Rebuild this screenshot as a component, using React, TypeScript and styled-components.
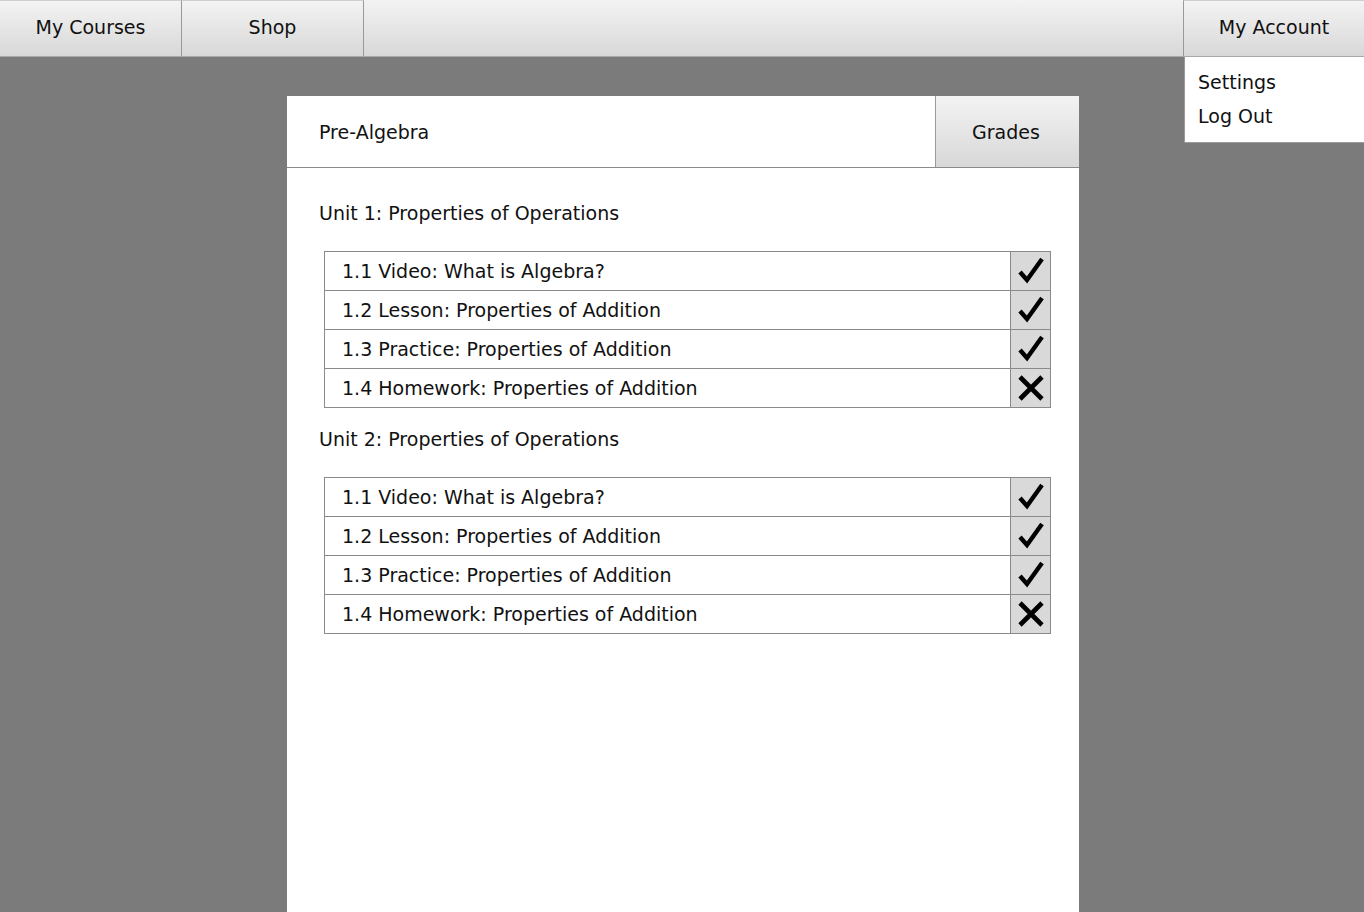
import React from "react";
import styled, { createGlobalStyle } from "styled-components";

const Global = createGlobalStyle`
  html, body { margin: 0; padding: 0; }
  body {
    background: #7b7b7b;
    font-family: "DejaVu Sans", Verdana, sans-serif;
    color: #111;
    min-height: 912px;
    overflow: hidden;
  }
`;

const Page = styled.div`
  display: flex;
  flex-direction: column;
  height: 912px;
`;

const TopBar = styled.nav`
  display: flex;
  height: 57px;
  box-sizing: border-box;
  background: linear-gradient(#f3f3f3, #d8d8d8);
  border-bottom: 1px solid #a8a8a8;
`;

const NavButton = styled.div<{ $right?: boolean }>`
  width: ${(p) => (p.$right ? "181px" : "182px")};
  box-sizing: border-box;
  display: flex;
  align-items: center;
  justify-content: center;
  font-size: 19px;
  border-right: ${(p) => (p.$right ? "none" : "1px solid #9a9a9a")};
  border-left: ${(p) => (p.$right ? "1px solid #9a9a9a" : "none")};
  border-top: 1px solid #cfcfcf;
  margin-left: ${(p) => (p.$right ? "auto" : "0")};
  background: linear-gradient(#f3f3f3, #d8d8d8);
  padding-bottom: 3px;
`;

const Body = styled.div`
  flex: 1;
  position: relative;
  display: flex;
  justify-content: center;
  padding-top: 39px;
  padding-left: 2px;
`;

const Dropdown = styled.div`
  position: absolute;
  top: 0;
  right: 0;
  width: 180px;
  height: 86px;
  box-sizing: border-box;
  background: #fff;
  border-left: 1px solid #9a9a9a;
  border-bottom: 1px solid #9a9a9a;
  padding: 14px 0 0 13px;
  display: flex;
  flex-direction: column;
  gap: 11px;
  font-size: 19px;
`;

const MenuItem = styled.div`
  line-height: 23px;
`;

const Card = styled.main`
  width: 792px;
  background: #fff;
  display: flex;
  flex-direction: column;
`;

const CardHeader = styled.header`
  display: flex;
  height: 72px;
  box-sizing: border-box;
  border-bottom: 1px solid #8a8a8a;
`;

const CourseTitle = styled.div`
  flex: 1;
  display: flex;
  align-items: center;
  padding-left: 32px;
  font-size: 19px;
`;

const GradesButton = styled.div`
  width: 144px;
  box-sizing: border-box;
  display: flex;
  align-items: center;
  justify-content: center;
  font-size: 19px;
  border-left: 1px solid #9a9a9a;
  background: linear-gradient(#f3f3f3, #d8d8d8);
  padding-right: 3px;
`;

const Content = styled.div`
  padding: 33px 28px 0 32px;
  display: flex;
  flex-direction: column;
`;

const UnitTitle = styled.h2`
  margin: 0;
  font-weight: normal;
  font-size: 19px;
  line-height: 24px;
  margin-bottom: 26px;
`;

const List = styled.div`
  margin-left: 5px;
  border: 1px solid #8a8a8a;
  border-bottom: none;
  margin-bottom: 19px;
`;

const Row = styled.div`
  display: flex;
  height: 39px;
  box-sizing: border-box;
  border-bottom: 1px solid #8a8a8a;
`;

const RowLabel = styled.div`
  flex: 1;
  display: flex;
  align-items: center;
  padding-left: 17px;
  font-size: 19px;
`;

const StatusCell = styled.div`
  width: 39px;
  border-left: 1px solid #8a8a8a;
  background: #d9d9d9;
  display: flex;
  align-items: center;
  justify-content: center;
`;

const Check = () => (
  <svg width="30" height="30" viewBox="0 0 30 30">
    <path d="M4 16 L11 24 L26 3" fill="none" stroke="#000" strokeWidth="4.4" strokeLinecap="butt" strokeLinejoin="miter" />
  </svg>
);

const Cross = () => (
  <svg width="28" height="28" viewBox="0 0 28 28">
    <path d="M3 3 L25 25 M25 3 L3 25" fill="none" stroke="#000" strokeWidth="4.6" />
  </svg>
);

const items = [
  { label: "1.1 Video: What is Algebra?", done: true },
  { label: "1.2 Lesson: Properties of Addition", done: true },
  { label: "1.3 Practice: Properties of Addition", done: true },
  { label: "1.4 Homework: Properties of Addition", done: false },
];

const units = ["Unit 1: Properties of Operations", "Unit 2: Properties of Operations"];

export default function App() {
  return (
    <Page>
      <Global />
      <TopBar>
        <NavButton>My Courses</NavButton>
        <NavButton>Shop</NavButton>
        <NavButton $right>My Account</NavButton>
      </TopBar>
      <Body>
        <Card>
          <CardHeader>
            <CourseTitle>Pre-Algebra</CourseTitle>
            <GradesButton>Grades</GradesButton>
          </CardHeader>
          <Content>
            {units.map((u) => (
              <React.Fragment key={u}>
                <UnitTitle>{u}</UnitTitle>
                <List>
                  {items.map((it) => (
                    <Row key={it.label}>
                      <RowLabel>{it.label}</RowLabel>
                      <StatusCell>{it.done ? <Check /> : <Cross />}</StatusCell>
                    </Row>
                  ))}
                </List>
              </React.Fragment>
            ))}
          </Content>
        </Card>
        <Dropdown>
          <MenuItem>Settings</MenuItem>
          <MenuItem>Log Out</MenuItem>
        </Dropdown>
      </Body>
    </Page>
  );
}
